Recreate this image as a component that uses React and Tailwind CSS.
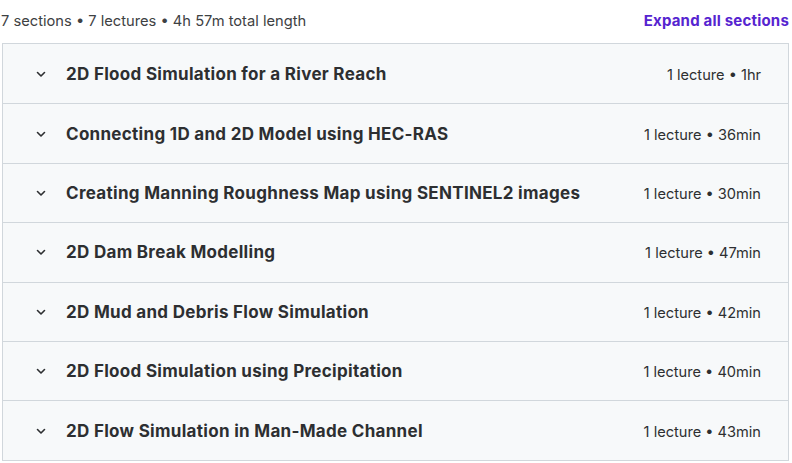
import React from "react";

const sections = [
  { title: "2D Flood Simulation for a River Reach", meta: "1 lecture • 1hr" },
  { title: "Connecting 1D and 2D Model using HEC-RAS", meta: "1 lecture • 36min" },
  { title: "Creating Manning Roughness Map using SENTINEL2 images", meta: "1 lecture • 30min" },
  { title: "2D Dam Break Modelling", meta: "1 lecture • 47min" },
  { title: "2D Mud and Debris Flow Simulation", meta: "1 lecture • 42min" },
  { title: "2D Flood Simulation using Precipitation", meta: "1 lecture • 40min" },
  { title: "2D Flow Simulation in Man-Made Channel", meta: "1 lecture • 43min" },
];

function Chevron() {
  return (
    <svg width="12" height="12" viewBox="0 0 24 24" fill="none" stroke="#2d2f31" strokeWidth="3.2" strokeLinecap="round" strokeLinejoin="round">
      <path d="M5 9l7 7 7-7" />
    </svg>
  );
}

export default function App() {
  return (
    <div className="w-[792px] h-[463px] bg-white text-[#2d2f31] font-['Inter',sans-serif] overflow-hidden">
      <div className="flex items-center justify-between h-[43px] pl-[1px] pr-[3px]">
        <span className="text-[14.7px] text-[#3e4143]">7 sections • 7 lectures • 4h 57m total length</span>
        <button className="text-[15px] font-bold tracking-[0.2px] text-[#5624d0]">Expand all sections</button>
      </div>
      <div className="ml-[2px] w-[787px] border border-[#d1d7dc]">
        {sections.map((s, i) => (
          <div
            key={i}
            className={`flex items-center justify-between h-[59.4px] bg-[#f7f9fa] pl-[32px] pr-[27px] ${i > 0 ? "border-t border-[#d1d7dc]" : ""}`}
          >
            <div className="flex items-center gap-[19px]">
              <Chevron />
              <span className="text-[17px] font-bold tracking-[0.3px] leading-[20px]">{s.title}</span>
            </div>
            <span className="text-[14.6px] leading-[20px] mt-[2px]">{s.meta}</span>
          </div>
        ))}
      </div>
    </div>
  );
}
